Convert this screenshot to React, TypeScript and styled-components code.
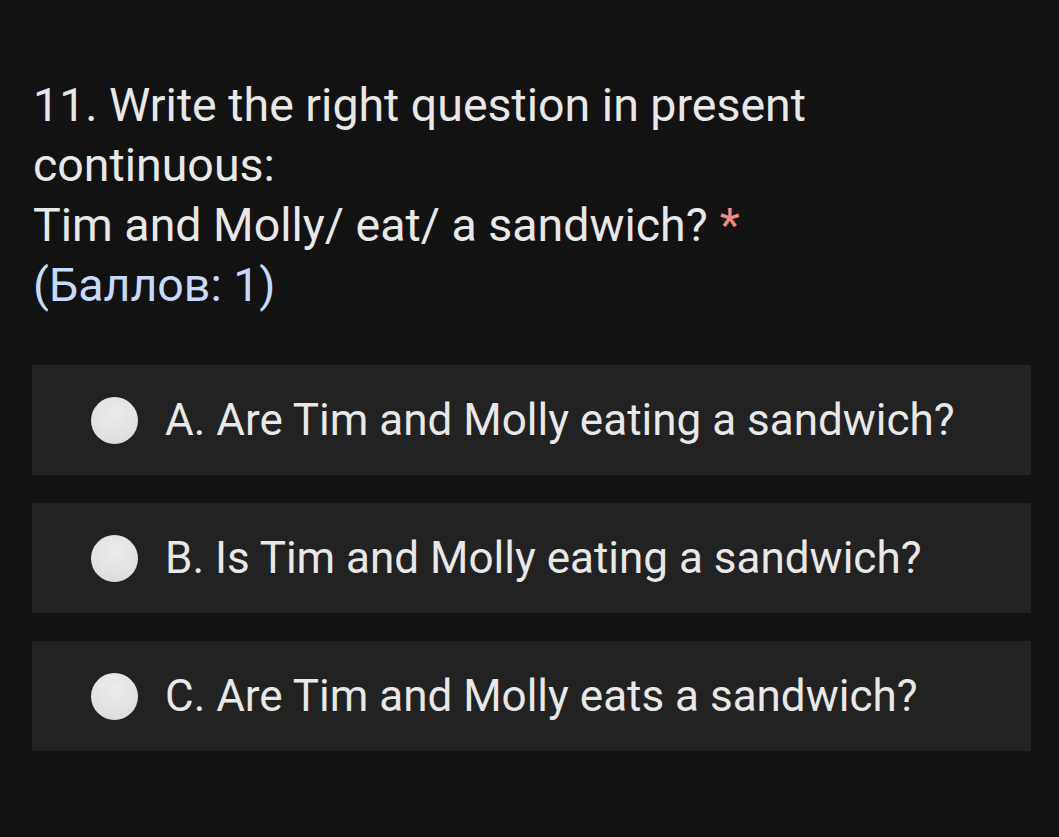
import React from "react";
import styled, { createGlobalStyle } from "styled-components";

const Global = createGlobalStyle`
  html, body { margin: 0; padding: 0; background: #121212; }
  body { font-family: Roboto, "Noto Sans", sans-serif; }
`;

const Page = styled.div`
  min-height: 837px;
  box-sizing: border-box;
  padding: 75px 28px 0 32px;
  background: #121212;
  display: flex;
  flex-direction: column;
`;

const Title = styled.div`
  font-size: 46.5px;
  line-height: 60px;
  color: #e8e8e8;
  padding-left: 1px;
  max-width: 820px;
`;

const Required = styled.span`
  color: #f28b82;
  margin-left: 12px;
`;

const Points = styled.div`
  color: #c6dafc;
`;

const Options = styled.div`
  margin-top: 50px;
  display: flex;
  flex-direction: column;
  gap: 28px;
`;

const Option = styled.label`
  height: 110px;
  background: #222222;
  display: flex;
  align-items: center;
  padding-left: 59px;
  gap: 27px;
`;

const Radio = styled.span`
  width: 47px;
  height: 47px;
  border-radius: 50%;
  flex: none;
  background: radial-gradient(circle at 50% 35%, #ececec 0%, #e2e2e2 60%, #d4d4d4 100%);
`;

const OptionText = styled.span`
  font-size: 44px;
  color: #e8e8e8;
`;

const options = [
  "A. Are Tim and Molly eating a sandwich?",
  "B. Is Tim and Molly eating a sandwich?",
  "C. Are Tim and Molly eats a sandwich?",
];

export default function App() {
  return (
    <>
      <Global />
      <Page>
        <Title>
          11. Write the right question in present continuous:
          <br />
          Tim and Molly/ eat/ a sandwich?<Required>*</Required>
          <Points>(Баллов: 1)</Points>
        </Title>
        <Options>
          {options.map((o) => (
            <Option key={o}>
              <Radio />
              <OptionText>{o}</OptionText>
            </Option>
          ))}
        </Options>
      </Page>
    </>
  );
}
